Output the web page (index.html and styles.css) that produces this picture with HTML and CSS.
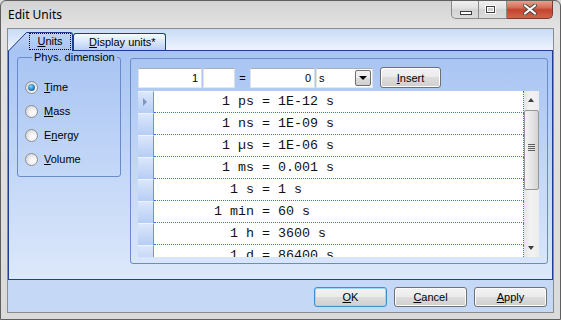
FILE: index.html
```html
<!DOCTYPE html>
<html><head><meta charset="utf-8">
<title>Edit Units</title>
<link rel="stylesheet" href="styles.css">
</head>
<body>
<div class="window">
  <div class="titlebar">
    <span class="caption">Edit Units</span>
    <div class="caption-buttons">
      <span class="cbtn min"><i></i></span>
      <span class="cbtn max"><i></i></span>
      <span class="cbtn close">
        <svg width="14" height="11" viewBox="0 0 14 11"><path d="M2,1.5 L12,9.5 M12,1.5 L2,9.5" stroke="#4a4a4a" stroke-width="4" stroke-linecap="round"/><path d="M2,1.5 L12,9.5 M12,1.5 L2,9.5" stroke="#fff" stroke-width="2.2" stroke-linecap="round"/></svg>
      </span>
    </div>
  </div>
  <div class="client">
    <div class="tabstrip">
      <div class="tab selected">
        <svg class="slant" width="19" height="19" viewBox="0 0 19 19">
          <defs><linearGradient id="tg" x1="0" y1="0" x2="0" y2="1"><stop offset="0" stop-color="#bed3f6"/><stop offset="1" stop-color="#a9c4f3"/></linearGradient></defs>
          <polygon points="0,19 18,0 19,0 19,19" fill="url(#tg)"/>
          <path d="M0.5,19 L18.5,0.5 L19,0.5" stroke="#1d3f91" fill="none"/>
        </svg>
        <span class="tab-body"><span class="focus"><u>U</u>nits</span></span>
      </div>
      <div class="tab"><u>D</u>isplay units*</div>
    </div>
    <div class="panel">
      <fieldset class="dims">
        <legend>Phys. dimension</legend>
        <label class="radio checked"><span class="dot"></span><span><u>T</u>ime</span></label>
        <label class="radio"><span class="dot"></span><span><u>M</u>ass</span></label>
        <label class="radio"><span class="dot"></span><span>E<u>n</u>ergy</span></label>
        <label class="radio"><span class="dot"></span><span><u>V</u>olume</span></label>
      </fieldset>
      <div class="units-box">
        <div class="entry">
          <span class="textbox factor">1</span>
          <span class="textbox prefix"></span>
          <span class="eq">=</span>
          <span class="textbox value">0</span>
          <span class="combo"><span class="combo-text">s</span><span class="drop"></span></span>
          <button class="btn insert"><u>I</u>nsert</button>
        </div>
        <div class="grid">
          <div class="rows">
            <div class="row current"><span class="hdr"></span><span class="cell"><span class="lhs">1 ps</span><span class="op">=</span><span class="rhs">1E-12 s</span></span></div>
            <div class="row"><span class="hdr"></span><span class="cell"><span class="lhs">1 ns</span><span class="op">=</span><span class="rhs">1E-09 s</span></span></div>
            <div class="row"><span class="hdr"></span><span class="cell"><span class="lhs">1 µs</span><span class="op">=</span><span class="rhs">1E-06 s</span></span></div>
            <div class="row"><span class="hdr"></span><span class="cell"><span class="lhs">1 ms</span><span class="op">=</span><span class="rhs">0.001 s</span></span></div>
            <div class="row"><span class="hdr"></span><span class="cell"><span class="lhs">1 s</span><span class="op">=</span><span class="rhs">1 s</span></span></div>
            <div class="row"><span class="hdr"></span><span class="cell"><span class="lhs">1 min</span><span class="op">=</span><span class="rhs">60 s</span></span></div>
            <div class="row"><span class="hdr"></span><span class="cell"><span class="lhs">1 h</span><span class="op">=</span><span class="rhs">3600 s</span></span></div>
            <div class="row"><span class="hdr"></span><span class="cell"><span class="lhs">1 d</span><span class="op">=</span><span class="rhs">86400 s</span></span></div>
          </div>
          <div class="vscroll">
            <span class="arrow up"></span>
            <span class="thumb"><i></i><i></i><i></i><i></i></span>
            <span class="arrow down"></span>
          </div>
        </div>
      </div>
    </div>
    <div class="footer">
      <button class="btn default"><u>O</u>K</button>
      <button class="btn"><u>C</u>ancel</button>
      <button class="btn"><u>A</u>pply</button>
    </div>
  </div>
</div>
</body></html>
```

FILE: styles.css
```css
body {
  margin: 0;
  font-family: "Liberation Sans", Arial, sans-serif;
  font-size: 11px;
  color: #000;
  background: #dcdcdc;
}
u {
  text-decoration: underline;
  text-underline-offset: 1px;
}
.window {
  box-sizing: border-box;
  width: 561px;
  height: 320px;
  border: 1px solid #5f5f5f;
  border-radius: 6px 6px 0 0;
  background: linear-gradient(#d3d3d3, #e3e3e3 28px, #dadada);
  overflow: hidden;
}

/* title bar */
.titlebar {
  display: flex;
  height: 27px;
  padding: 0 7px 0 7px;
}
.caption {
  font-family: "Noto Sans", "Open Sans", sans-serif;
  font-size: 12px;
  line-height: 28px;
}
.caption-buttons {
  display: flex;
  margin-left: auto;
  margin-top: -1px;
  height: 19px;
}
.cbtn {
  box-sizing: border-box;
  position: relative;
  height: 19px;
  border: 1px solid #8a8a8a;
  border-top: none;
  background: linear-gradient(#f2f2f2, #e2e2e2 45%, #d3d3d3 55%, #dcdcdc);
}
.cbtn.min {
  width: 28px;
  border-radius: 0 0 0 5px;
}
.cbtn.max {
  width: 28px;
  border-left: none;
}
.cbtn.close {
  width: 46px;
  border-left: none;
  border-color: #7a3a30;
  border-radius: 0 0 5px 0;
  background: linear-gradient(#e9a696, #d6705a 40%, #c4432c 55%, #d3654c);
  display: flex;
  align-items: center;
  justify-content: center;
}
.cbtn.min i {
  position: absolute;
  left: 8px;
  top: 11px;
  width: 10px;
  height: 2px;
  border: 1px solid #3c3c3c;
  background: #fff;
}
.cbtn.max i {
  position: absolute;
  left: 7px;
  top: 6px;
  width: 7px;
  height: 5px;
  border: 1px solid #3c3c3c;
  box-shadow: 0 0 0 1px #fff, inset 0 0 0 1px #fff;
  background: #cfcfcf;
}

/* client area */
.client {
  margin: 0 6px;
  border: 1px solid #8c8c8c;
  height: 283px;
  background: #c5d9f7;
}
.tabstrip {
  display: flex;
  align-items: flex-end;
  height: 21px;
  background: linear-gradient(#c8dbf7, #eef4fd);
}
.tab {
  box-sizing: border-box;
  height: 17px;
  width: 93px;
  padding-left: 15px;
  line-height: 16px;
  border: 1px solid #1d3f91;
  border-bottom: none;
  border-radius: 3px 3px 0 0;
  background: linear-gradient(#f7faff, #d9e6fb 50%, #b9cff4);
}
.tab.selected {
  display: flex;
  width: auto;
  height: 19px;
  padding: 0;
  margin-bottom: -1px;
  border: none;
  background: none;
  position: relative;
  z-index: 1;
}
.tab-body {
  box-sizing: border-box;
  width: 46px;
  height: 19px;
  border-top: 1px solid #1d3f91;
  border-right: 1px solid #1d3f91;
  border-radius: 0 3px 0 0;
  background: linear-gradient(#bed3f6, #a9c4f3);
  padding: 0 0 1px 2px;
}
.focus {
  display: block;
  box-sizing: border-box;
  height: 17px;
  width: 42px;
  border: 1px dotted #000;
  text-align: center;
  line-height: 15px;
}

.panel {
  display: flex;
  align-items: flex-start;
  box-sizing: border-box;
  height: 230px;
  padding: 0 4px 0 8px;
  gap: 9px;
  border: 1px solid #1d3f91;
  background: linear-gradient(#a8c4f3, #dce8fb);
}
.dims {
  box-sizing: border-box;
  width: 104px;
  margin: 0;
  padding: 11px 0 5px 7px;
  border: 1px solid #6a8bcb;
  border-radius: 3px;
}
.dims legend {
  margin-left: 7px;
  padding: 0 2px;
  line-height: 13px;
}
.radio {
  display: flex;
  align-items: center;
  height: 24px;
  gap: 6px;
}
.dot {
  box-sizing: border-box;
  position: relative;
  width: 13px;
  height: 13px;
  border-radius: 50%;
  border: 1px solid #8c8f94;
  background: radial-gradient(circle at 65% 65%, #ffffff, #f0f0f0 40%, #c9c9c9);
}
.checked .dot::after {
  content: "";
  position: absolute;
  left: 2px;
  top: 2px;
  width: 7px;
  height: 7px;
  border-radius: 50%;
  background: radial-gradient(circle at 40% 35%, #8ad6f7, #2a80bf 55%, #0f426f);
}

.units-box {
  box-sizing: border-box;
  width: 418px;
  height: 206px;
  margin-top: 7px;
  padding: 8px 8px 0 7px;
  border: 1px solid #6a8bcb;
  border-radius: 3px;
}
.entry {
  display: flex;
  align-items: center;
  height: 21px;
}
.textbox {
  box-sizing: border-box;
  height: 20px;
  padding: 0 3px;
  line-height: 18px;
  background: #fff;
  border: 1px solid #abadb3;
  border-color: #abadb3 #dbdfe6 #e3e9ef #e2e3ea;
  text-align: right;
}
.factor { width: 64px; }
.prefix { width: 32px; margin-left: 1px; }
.eq {
  width: 15px;
  text-align: center;
}
.value { width: 65px; }
.combo {
  box-sizing: border-box;
  display: flex;
  align-items: center;
  width: 57px;
  height: 20px;
  margin-left: 1px;
  padding: 0 1px 0 2px;
  background: #fff;
  border: 1px solid #abadb3;
  border-color: #abadb3 #dbdfe6 #e3e9ef #e2e3ea;
}
.combo-text { flex: 1; }
.drop {
  box-sizing: border-box;
  position: relative;
  width: 16px;
  height: 16px;
  border: 1px solid #707070;
  border-radius: 2px;
  background: linear-gradient(#f2f2f2, #ebebeb 50%, #dddddd 50%, #cfcfcf);
}
.drop::after {
  content: "";
  position: absolute;
  left: 3px;
  top: 5px;
  border-top: 4px solid #000;
  border-left: 4px solid transparent;
  border-right: 4px solid transparent;
}
.btn {
  box-sizing: border-box;
  width: 73px;
  height: 20px;
  padding: 0;
  font: inherit;
  color: #000;
  border: 1px solid #707070;
  border-radius: 3px;
  background: linear-gradient(#f2f2f2, #ebebeb 50%, #dddddd 50%, #cfcfcf);
  box-shadow: inset 0 0 0 1px #fcfcfc;
}
.btn.insert {
  width: 61px;
  height: 21px;
  margin-left: 7px;
}
.btn.default {
  border-color: #3c8fd0;
  box-shadow: inset 0 0 0 1px #9fd5f6;
}

.grid {
  display: flex;
  width: 401px;
  height: 166px;
  margin-top: 3px;
  overflow: hidden;
}
.rows {
  width: 386px;
}
.row {
  display: flex;
  height: 22px;
}
.hdr {
  box-sizing: border-box;
  position: relative;
  width: 16px;
  border-right: 1px solid #7394d4;
  border-top: 1px solid #eef4fe;
  background: linear-gradient(#dbe7fb, #b6cdf4);
}
.current .hdr::after {
  content: "";
  position: absolute;
  left: 5px;
  top: 6px;
  border-left: 4px solid #7d97c4;
  border-top: 4px solid transparent;
  border-bottom: 4px solid transparent;
}
.cell {
  box-sizing: border-box;
  display: flex;
  width: 370px;
  background: #fff;
  border-right: 1px dotted #3d6fd6;
  border-bottom: 1px dotted #3d6fd6;
  font-family: "Liberation Mono", "Courier New", monospace;
  font-size: 13.33px;
  line-height: 21px;
  color: #111;
  white-space: pre;
}
.lhs {
  width: 100px;
  text-align: right;
}
.op {
  width: 24px;
  text-align: center;
}
.vscroll {
  position: relative;
  width: 15px;
  background: linear-gradient(90deg, #e4e4e4, #f2f2f2 40%, #ededed);
}
.arrow {
  position: absolute;
  left: 4px;
  border-left: 3.5px solid transparent;
  border-right: 3.5px solid transparent;
}
.arrow.up {
  top: 7px;
  border-bottom: 4px solid #3d3d3d;
}
.arrow.down {
  top: 155px;
  border-top: 4px solid #3d3d3d;
}
.thumb {
  box-sizing: border-box;
  position: absolute;
  left: 0;
  top: 19px;
  width: 15px;
  height: 80px;
  padding-top: 33px;
  border: 1px solid #979797;
  border-radius: 2px;
  background: linear-gradient(90deg, #f4f4f4, #e6e6e6 50%, #d4d4d4);
}
.thumb i {
  display: block;
  width: 7px;
  height: 1px;
  margin: 0 0 1px 3px;
  background: #5e5e5e;
}

.footer {
  display: flex;
  justify-content: flex-end;
  gap: 7px;
  padding: 7px 6px 0 0;
}
```
